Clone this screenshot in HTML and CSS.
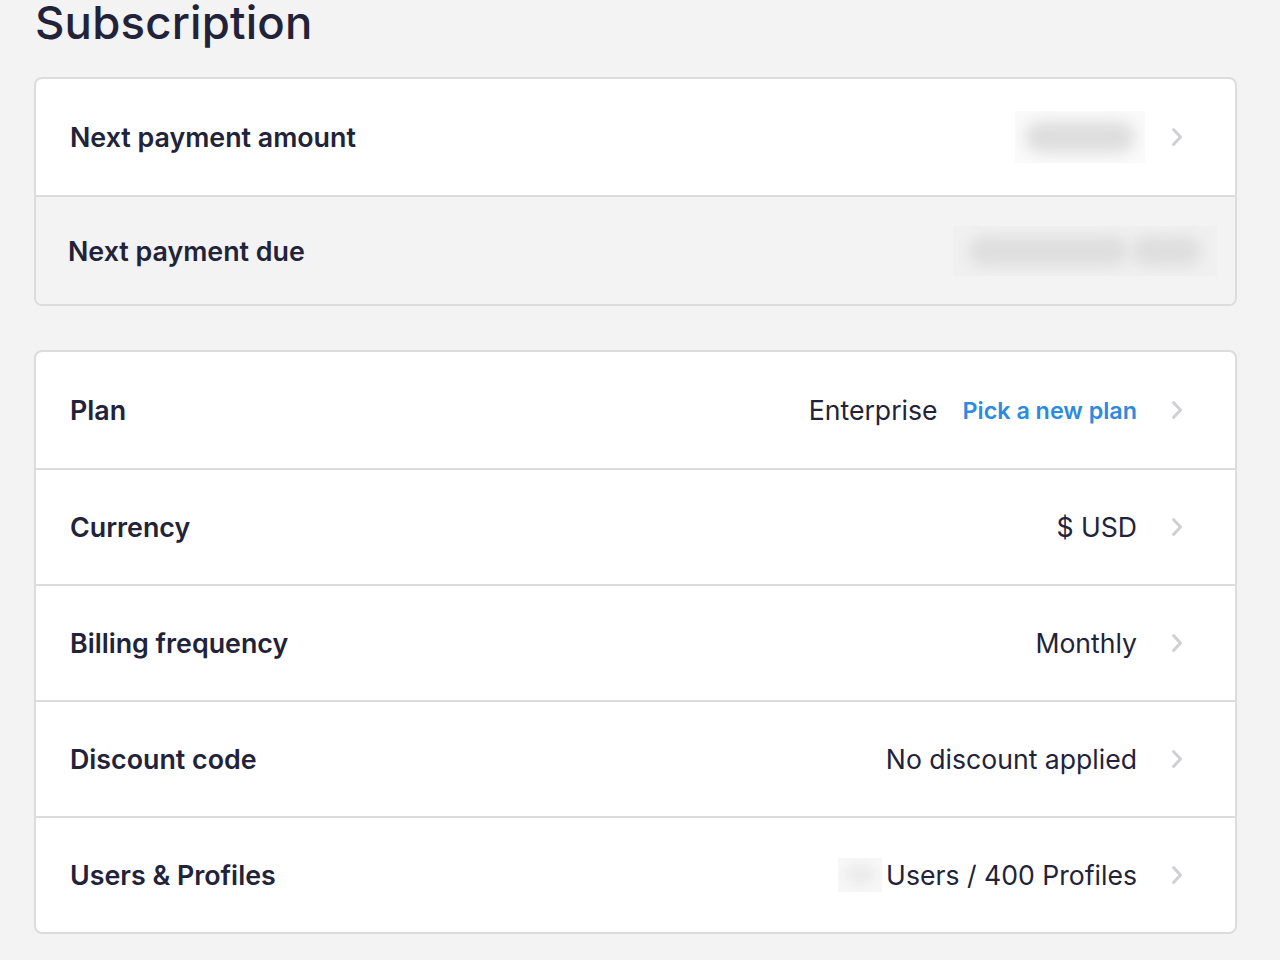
FILE: index.html
```html
<!DOCTYPE html>
<html lang="en">
<head>
<meta charset="utf-8">
<title>Subscription</title>
<link rel="stylesheet" href="styles.css">
</head>
<body>
<main class="page">
  <h1 class="title">Subscription</h1>

  <section class="card">
    <div class="row">
      <span class="label">Next payment amount</span>
      <span class="value">
        <span class="redacted redacted-amount"><span class="smudge"></span></span>
      </span>
      <svg class="chev" viewBox="0 0 12 20" aria-hidden="true"><path d="M2.5 2.5l7 7.5-7 7.5"/></svg>
    </div>
    <div class="row row-muted">
      <span class="label label-shift">Next payment due</span>
      <span class="value">
        <span class="redacted redacted-date"><span class="smudge"></span><span class="smudge smudge-short"></span></span>
      </span>
    </div>
  </section>

  <section class="card">
    <div class="row">
      <span class="label">Plan</span>
      <span class="value">Enterprise <a class="link" href="#">Pick a new plan</a></span>
      <svg class="chev" viewBox="0 0 12 20" aria-hidden="true"><path d="M2.5 2.5l7 7.5-7 7.5"/></svg>
    </div>
    <div class="row">
      <span class="label">Currency</span>
      <span class="value">$ USD</span>
      <svg class="chev" viewBox="0 0 12 20" aria-hidden="true"><path d="M2.5 2.5l7 7.5-7 7.5"/></svg>
    </div>
    <div class="row">
      <span class="label">Billing frequency</span>
      <span class="value">Monthly</span>
      <svg class="chev" viewBox="0 0 12 20" aria-hidden="true"><path d="M2.5 2.5l7 7.5-7 7.5"/></svg>
    </div>
    <div class="row">
      <span class="label">Discount code</span>
      <span class="value">No discount applied</span>
      <svg class="chev" viewBox="0 0 12 20" aria-hidden="true"><path d="M2.5 2.5l7 7.5-7 7.5"/></svg>
    </div>
    <div class="row">
      <span class="label">Users &amp; Profiles</span>
      <span class="value"><span class="redacted redacted-count"><span class="smudge"></span></span>Users / 400 Profiles</span>
      <svg class="chev" viewBox="0 0 12 20" aria-hidden="true"><path d="M2.5 2.5l7 7.5-7 7.5"/></svg>
    </div>
  </section>
</main>
</body>
</html>
```

FILE: styles.css
```css
* {
  box-sizing: border-box;
}

html,
body {
  margin: 0;
  background: #f3f3f3;
}

body {
  font-family: Inter, "Noto Sans", "Liberation Sans", sans-serif;
  color: #22233a;
  overflow: hidden;
}

.page {
  padding: 0 43px 0 34px;
  display: flex;
  flex-direction: column;
}

.title {
  margin: -6px 0 25px 1px;
  font-size: 45.5px;
  font-weight: 500;
  line-height: 58px;
  letter-spacing: 0.2px;
}

.card {
  background: #fff;
  border: 2px solid #dcdcdc;
  border-radius: 8px;
  overflow: hidden;
  margin-bottom: 44px;
}

.row {
  display: flex;
  align-items: center;
  height: 116px;
  padding: 0 52px 0 34px;
  border-top: 2px solid #dcdcdc;
}

.row:first-child {
  border-top: 0;
}

.row-muted {
  background: #f3f3f3;
  height: 109px;
  padding-right: 18px;
}

.label {
  font-size: 26.8px;
  font-weight: 600;
  flex: 1;
}

.label-shift {
  margin-left: -2px;
}

.value {
  font-size: 26.6px;
  font-weight: 400;
  display: flex;
  align-items: center;
}

.link {
  color: #2d8ae0;
  font-weight: 600;
  font-size: 23.3px;
  text-decoration: none;
  margin-left: 25px;
}

.chev {
  width: 12px;
  height: 20px;
  margin-left: 34px;
  fill: none;
  stroke: #d0d0d4;
  stroke-width: 3;
  stroke-linecap: round;
  stroke-linejoin: round;
}

/* blurred placeholders for hidden figures */
.redacted {
  display: flex;
  align-items: center;
  justify-content: center;
  gap: 4px;
  background: #fafafa;
  overflow: hidden;
}

.redacted-amount {
  width: 130px;
  height: 52px;
  margin-right: -8px;
}

.redacted-date {
  width: 264px;
  height: 50px;
  background: #f0f0f0;
}

.redacted-count {
  width: 44px;
  height: 34px;
  margin-right: 4px;
  margin-left: 4px;
  background: #f7f7f7;
}

.smudge {
  display: block;
  width: 84%;
  height: 60%;
  border-radius: 16px;
  background: #dedede;
  filter: blur(7px);
}

.redacted-date .smudge {
  width: 60%;
}

.redacted-date .smudge-short {
  width: 26%;
}

.redacted-count .smudge {
  width: 70%;
  height: 60%;
  background: #ececec;
  filter: blur(4px);
}
```
